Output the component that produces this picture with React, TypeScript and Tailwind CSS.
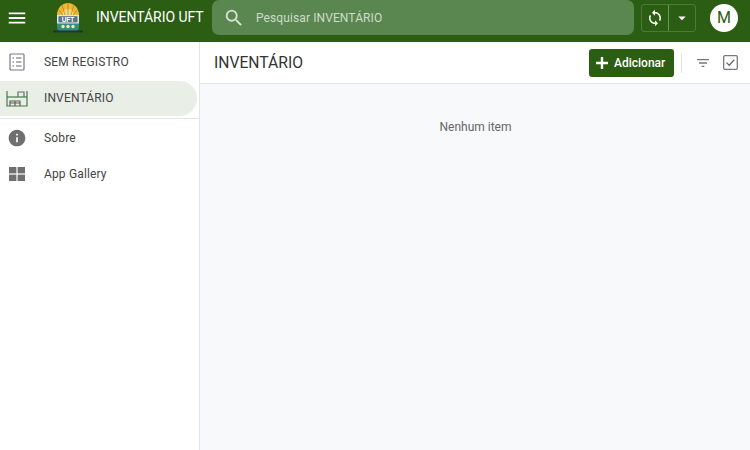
import {
  MdArrowDropDown,
  MdFilterList,
  MdInfo,
  MdMenu,
  MdSearch,
  MdSync,
} from "react-icons/md";

function UftLogo() {
  return (
    <svg width="32" height="34" viewBox="0 0 32 34">
      <path d="M5 14 A11 12 0 0 1 27 14 Z" fill="#f2b632" />
      <path d="M10 14 A6 6 0 0 1 22 14 Z" fill="#f7d77a" />
      <path d="M16 2 V14 M10 3.5 L13 14 M22 3.5 L19 14 M6 8 L11 14 M26 8 L21 14" stroke="#8a7a20" strokeWidth="0.6" />
      <path d="M5 14 H27 V26 Q27 29 24 30 H8 Q5 29 5 26 Z" fill="#2f8f7f" />
      <rect x="5" y="14" width="22" height="8.5" fill="#dfe6ec" />
      <rect x="6.5" y="15.2" width="19" height="6.2" fill="#5b7184" />
      <text x="16" y="20.6" textAnchor="middle" fontSize="6.5" fontWeight="700" fill="#fff" fontFamily="Liberation Sans, sans-serif">
        UFT
      </text>
      <circle cx="11" cy="25.5" r="1.7" fill="#f5e6a8" />
      <circle cx="16" cy="25.5" r="1.7" fill="#f5e6a8" />
      <circle cx="21" cy="25.5" r="1.7" fill="#f5e6a8" />
      <path d="M1 30.5 H31" stroke="#24303a" strokeWidth="2" />
    </svg>
  );
}

function RecordIcon() {
  return (
    <svg width="16" height="18" viewBox="0 0 16 18" fill="none" stroke="#77778a" strokeWidth="1.2">
      <rect x="1" y="1" width="14" height="16" rx="1" />
      <path d="M3.5 5 H5 M7 5 H12.5 M3.5 9 H5 M7 9 H12.5 M3.5 13 H5 M7 13 H12.5" stroke="#666" />
    </svg>
  );
}

function WarehouseIcon() {
  return (
    <svg width="22" height="17" viewBox="0 0 22 17" fill="none" stroke="#3f7f4a" strokeWidth="1.2">
      <path d="M1 1 V16 H21 V1" />
      <path d="M1 7 H21" />
      <path d="M12 7 V2 H18 V7" stroke="#6b6b6b" />
      <path d="M4 16 V11 H14 V16 M4 13 H14 M9 11 V16" stroke="#5f5f5f" />
    </svg>
  );
}

function GalleryIcon() {
  return (
    <svg width="16" height="14" viewBox="0 0 16 14" fill="#6f6f6f">
      <rect width="7.4" height="6.4" />
      <rect x="8.6" width="7.4" height="6.4" />
      <rect y="7.6" width="7.4" height="6.4" />
      <rect x="8.6" y="7.6" width="7.4" height="6.4" />
    </svg>
  );
}

function CheckBoxIcon() {
  return (
    <svg width="15" height="15" viewBox="0 0 15 15" fill="none" stroke="#77778a" strokeWidth="1.3">
      <rect x="0.7" y="0.7" width="13.6" height="13.6" rx="1.2" />
      <path d="M3.5 7.6 L6.2 10.2 L11.2 4.8" stroke="#666" />
    </svg>
  );
}

function PlusIcon() {
  return (
    <svg width="12" height="12" viewBox="0 0 12 12" fill="none" stroke="#fff" strokeWidth="2.4">
      <path d="M6 0 V12 M0 6 H12" />
    </svg>
  );
}

function NavItem({
  icon,
  label,
  active,
}: {
  icon: React.ReactNode;
  label: string;
  active?: boolean;
}) {
  return (
    <div className={`mr-[2px] flex h-[35px] items-center rounded-r-[18px] ${active ? "bg-[#e9eee7] pb-[1px]" : ""}`}>
      <div className="flex w-[44px] shrink-0 justify-center pr-[11px]">{icon}</div>
      <span className="text-[12px] tracking-[0.15px] text-[#444]">{label}</span>
    </div>
  );
}

export default function App() {
  return (
    <div className="flex h-[450px] w-[750px] flex-col overflow-hidden bg-white font-['Roboto',sans-serif]">
      <header className="flex h-[42px] shrink-0 items-center bg-[#2b5d12] pb-[7px] text-white">
        <div className="flex w-[52px] shrink-0 pl-[6px]">
          <MdMenu size={22} />
        </div>
        <div className="w-[44px] shrink-0">
          <UftLogo />
        </div>
        <span className="w-[116px] shrink-0 text-[14px] tracking-[-0.05px]">INVENTÁRIO UFT</span>
        <div className="flex h-[35px] w-[422px] shrink-0 items-center rounded-[7px] bg-[#5a8650] pl-[11px]">
          <MdSearch size={22} className="text-[#d8e4d4]" />
          <span className="ml-[11px] text-[12px] tracking-[0.1px] text-[#cfdccb]">Pesquisar INVENTÁRIO</span>
        </div>
        <div className="ml-[7px] flex h-[28px] w-[55px] shrink-0 rounded-[3px] border border-[#4c7a38]">
          <div className="flex w-[27px] items-center justify-center border-r border-[#6f9460]">
            <MdSync size={18} />
          </div>
          <div className="flex flex-1 items-center justify-center">
            <MdArrowDropDown size={18} />
          </div>
        </div>
        <div className="ml-[14px] flex h-[28px] w-[28px] shrink-0 items-center justify-center rounded-full bg-white text-[16px] text-[#2b5d12]">
          M
        </div>
      </header>
      <div className="flex min-h-0 flex-1">
        <aside className="w-[200px] shrink-0 border-r border-[#e4e4e4] bg-white">
          <div className="border-b border-[#e4e4e4] py-[2px]">
            <NavItem icon={<RecordIcon />} label="SEM REGISTRO" />
            <div className="mt-[2px]">
              <NavItem icon={<WarehouseIcon />} label="INVENTÁRIO" active />
            </div>
          </div>
          <div className="pt-[1px]">
            <NavItem icon={<MdInfo size={20} className="text-[#6f6f6f]" />} label="Sobre" />
            <div className="mt-[1px]">
              <NavItem icon={<GalleryIcon />} label="App Gallery" />
            </div>
          </div>
        </aside>
        <main className="flex min-w-0 flex-1 flex-col bg-[#f8f9fb]">
          <div className="flex h-[42px] shrink-0 items-center border-b border-[#e6e6e6] bg-white pl-[14px] pr-[12px]">
            <h1 className="text-[15.7px] text-[#333]">INVENTÁRIO</h1>
            <button className="ml-auto flex h-[28px] w-[85px] items-center gap-[6px] rounded-[3px] bg-[#2b5d12] pl-[7px] text-[12px] font-medium text-white">
              <PlusIcon />
              Adicionar
            </button>
            <div className="mx-[7px] h-[20px] w-px bg-[#e2e2e2]" />
            <div className="ml-[6px] flex w-[16px] justify-center">
              <MdFilterList size={18} className="text-[#777]" />
            </div>
            <div className="ml-[12px] flex">
              <CheckBoxIcon />
            </div>
          </div>
          <p className="mt-[34px] pl-[1px] text-center text-[12px] text-[#666]">Nenhum item</p>
        </main>
      </div>
    </div>
  );
}
